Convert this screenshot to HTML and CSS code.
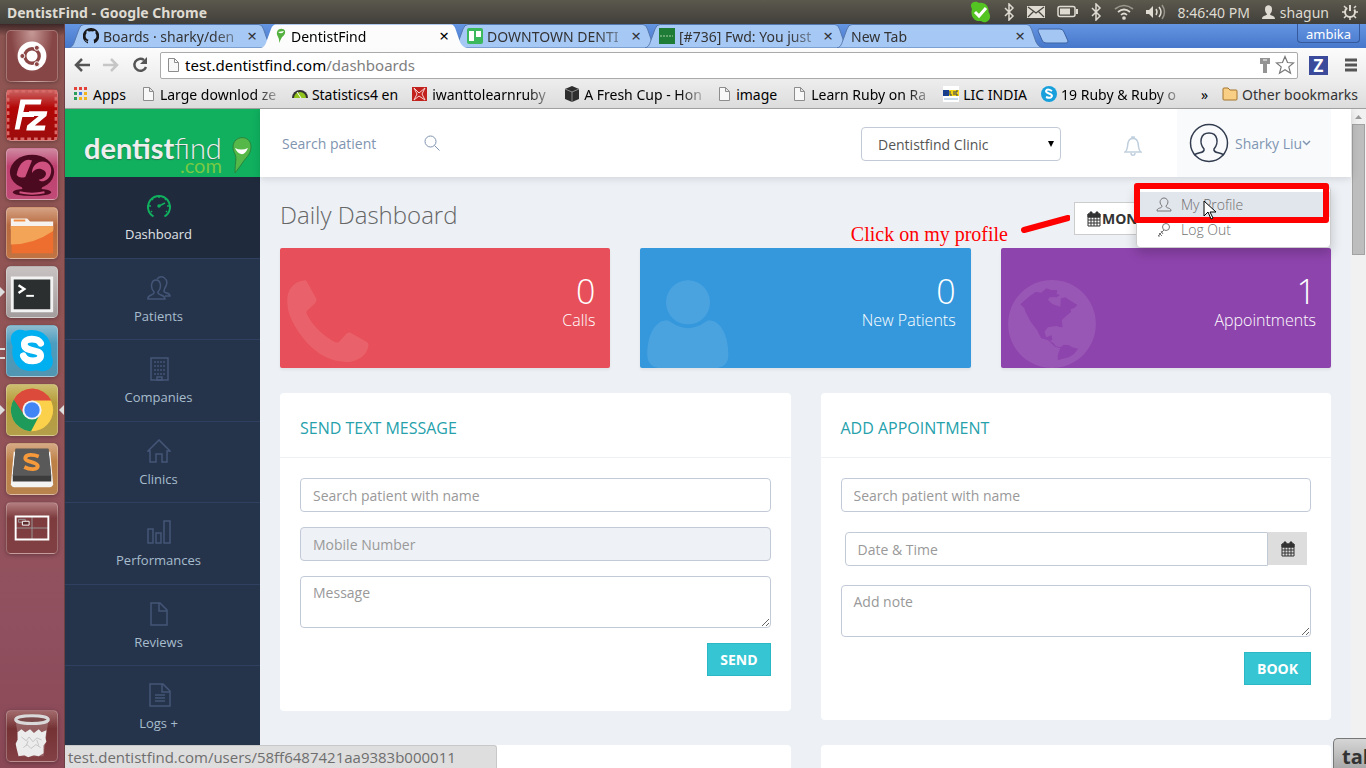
FILE: index.html
```html
<!DOCTYPE html>
<html lang="en">
<head>
    <meta charset="UTF-8">
    <meta name="viewport" content="width=device-width, initial-scale=1.0">
    <title>DentistFind</title>
    <link rel="stylesheet" href="styles.css">
</head>
<body>
    <svg class="sprite" aria-hidden="true">
        <symbol id="tabShape" viewBox="0 0 206 24">
            <path d="M0 24 C4 23 5 19 6 16 L10 5 Q11.500 .5 15 .5 H190 Q193 .5 194.500 5 L199 18 Q201 23 206 24z"/>
        </symbol>
        <symbol id="page" viewBox="0 0 16 16">
            <path d="M3.500 1.500h6l4 4v9h-10z M9.500 1.500v4h4" fill="#f8f8f8" stroke="#8d8d8d"/>
        </symbol>
        <symbol id="bluetooth" viewBox="0 0 12 18">
            <path d="M2 5l8 8-4 4V1l4 4-8 8" fill="none" stroke="#dfdbd2" stroke-width="1.500"/>
        </symbol>
        <symbol id="calendar" viewBox="0 0 14 16">
            <path d="M1 3h12v12H1z M1 6h12 M1 9h12 M1 12h12 M4 6v9 M7 6v9 M10 6v9" fill="none" stroke="#333"/>
            <path d="M1 3h12v3H1z M3 1h2v3H3z M9 1h2v3H9z" fill="#333" stroke="#333"/>
        </symbol>
    </svg>

    <!-- Desktop menu bar -->
    <div class="menubar">
        <span class="window-title">DentistFind - Google Chrome</span>
        <div class="indicators">
            <svg width="22" height="22" viewBox="0 0 22 22"><path d="M3 8C-1 1 7-1 10 2 17 1 20 6 19.500 11 24 17 18 24 12 20 5 21 1 15 3 8z" fill="#54c422"/><path d="M6 11l4 4 7-8" fill="none" stroke="#fff" stroke-width="3"/></svg>
            <svg width="12" height="18"><use href="#bluetooth"/></svg>
            <svg width="18" height="14" viewBox="0 0 18 14"><path d="M0 1h18v12H0z" fill="#dfdbd2"/><path d="M1 2l8 6 8-6 M1 12l6-6 M17 12l-6-6" fill="none" stroke="#47463f" stroke-width="1.200"/></svg>
            <svg width="21" height="14" viewBox="0 0 21 14"><rect x="1" y="1.500" width="17" height="10" rx="2" fill="none" stroke="#dfdbd2" stroke-width="1.500"/><path d="M3 3.500h10v6H3z M19 4h2v5h-2z" fill="#dfdbd2"/></svg>
            <svg width="12" height="18"><use href="#bluetooth"/></svg>
            <svg width="20" height="16" viewBox="0 0 20 16" fill="none" stroke="#dfdbd2" stroke-width="1.700"><path d="M1 5q9-7 18 0" opacity=".5"/><path d="M4 8q6-5 12 0M7 11q3-3 6 0"/><circle cx="10" cy="14" r="1"/></svg>
            <svg width="20" height="16" viewBox="0 0 20 16" fill="none" stroke="#dfdbd2" stroke-width="1.500"><path d="M0 6h3l4-4v12l-4-4H0z" fill="#dfdbd2" stroke="none"/><path d="M10 5q2 3 0 6M13 3q4 5 0 10"/><path d="M16 1q5 7 0 14" opacity=".5"/></svg>
            <span class="clock">8:46:40 PM</span>
            <span class="session">
                <svg width="13" height="15" viewBox="0 0 13 15"><path d="M3 4c0-5 7-5 7 0 0 3-1 4-2 5 0 2 5 1 5 5H0c0-4 5-3 5-5-1-1-2-2-2-5z" fill="#dfdbd2"/></svg>
                shagun
            </span>
            <svg width="18" height="18" viewBox="0 0 18 18" fill="none" stroke="#dfdbd2" stroke-width="2"><circle cx="9" cy="9" r="5" stroke-dasharray="24 8" stroke-dashoffset="-28"/><path d="M9 2v6"/><path d="M1 9h3M14 9h3M3 3l2 2M15 3l-2 2M3 15l2-2M15 15l-2-2M9 14v3" stroke-width="1.500"/></svg>
        </div>
    </div>

    <div class="desktop">
        <!-- Launcher -->
        <div class="launcher">
            <div class="tile dash">
                <svg viewBox="0 0 52 52"><circle cx="26" cy="26" r="15" fill="#fff"/><circle cx="26" cy="26" r="7.500" fill="none" stroke="#8b4746" stroke-width="3.500"/><g fill="#8b4746" stroke="#fff"><circle cx="16" cy="26" r="2.600"/><circle cx="31" cy="17.500" r="2.600"/><circle cx="31" cy="34.500" r="2.600"/></g></svg>
            </div>
            <div class="tile filezilla">
                <svg viewBox="0 0 52 52"><rect x="1" y="1" width="50" height="50" fill="none" stroke="#d86a68" stroke-width="3" stroke-dasharray="4 3"/><path d="M14 10h22l-1 5H19l-2 8h12l-1 5H16l-3 13H8z M23 22h19l-1 5-12 10h11l-1 5H20l1-5 12-10H22z" fill="#fff"/></svg>
            </div>
            <div class="tile rover">
                <svg viewBox="0 0 52 52"><ellipse cx="26" cy="24" rx="23" ry="18" fill="#4c0a20"/><ellipse cx="26" cy="45" rx="20" ry="4" fill="#4c0a20"/><path d="M14 36h24l-3 8H17z" fill="#4c0a20"/><path d="M10 27C12 14 20 9 26 12L19 29q-6 2-9-2z" fill="#cf5180"/><path d="M26 25c0-15 20-16 20-3 0 10-10 14-13 10 9-2 10-9 3-11-4-1-7 0-10 4z" fill="#cf5180"/><path d="M13 45q13 3 26 0" fill="none" stroke="#cf5180" stroke-width="2"/></svg>
            </div>
            <div class="tile files">
                <svg viewBox="0 0 52 52"><path d="M4 11h17l3 3h24v8H4z" fill="#f5f2ef"/><path d="M7 12h12v2H7z" fill="#f08b3f"/><path d="M4 19h44v28H5z" fill="#ee6e30"/><path d="M4 19h44v5Q28 38 4 38z" fill="#f3a457"/></svg>
            </div>
            <div class="tile terminal running">
                <svg viewBox="0 0 52 52"><path d="M4 10h44v37H4z" fill="#f2f2f2"/><path d="M7 13h38v31H7z" fill="#2c2f2f"/><path d="M12 19l6 4-6 4" fill="none" stroke="#fff" stroke-width="2.500"/><path d="M20 30h8" stroke="#fff" stroke-width="2"/></svg>
            </div>
            <div class="tile skype running-two">
                <svg viewBox="0 0 52 52"><path d="M6 21C0 9 9 1 19 5 38 1 48 14 46 30c6 13-5 20-15 16C14 50 3 38 6 21z" fill="#00aff0"/><path d="M35 18c-3-6-17-6-17 1 0 9 17 4 17 12 0 7-15 7-18 0" fill="none" stroke="#fff" stroke-width="7" stroke-linecap="round"/></svg>
            </div>
            <div class="tile chrome running focused">
                <svg viewBox="0 0 52 52"><circle cx="26" cy="26" r="22" fill="#fbd14b"/><path d="M26 26L7 15a22 22 0 0 0 18 33l9-17z" fill="#1e9a5a"/><path d="M26 16h20a22 22 0 0 0-39-1l10 15z" fill="#db4a3a"/><circle cx="26" cy="26" r="10" fill="#f4f4f4"/><circle cx="26" cy="26" r="8" fill="#4285f4"/></svg>
            </div>
            <div class="tile sublime">
                <svg viewBox="0 0 52 52"><path d="M7 8h38l3 34q-1 3-5 3H9q-4 0-5-3z" fill="#f4f4f4"/><path d="M9 5h34l3 28v6H6v-6z" fill="#3c3c3c"/><path d="M9 5h34l3 28H6z" fill="#595959"/><path d="M33 13c-5-2-14-3-14 2 0 4 13 3 13 8 0 4-8 4-14 1" fill="none" stroke="#f5993a" stroke-width="4"/></svg>
            </div>
            <div class="tile workspaces">
                <svg viewBox="0 0 52 52"><path d="M26 14v24M9 26h34" stroke="#999"/><path d="M9 14h34v24H9z" fill="none" stroke="#fff" stroke-width="2"/><path d="M12 17h7v3h-7z" fill="none" stroke="#999"/><path d="M16 19h7v4h-7z" fill="#5b2a2c" stroke="#fff"/></svg>
            </div>
            <div class="tile trash">
                <svg viewBox="0 0 52 52"><path d="M9 10h34l-5 37H14z" fill="#b08a8a" opacity=".5"/><path d="M11 22l4-3 4 3 5-3 4 4 5-4 3 3 5-2-1 8 1 4-3 4v8l-5 3-5-1-6 2-4-2-6 1-2-8-1-5 2-4z" fill="#ececec"/><path d="M15 27l5 4 3-4 4 5 4-4 5 2M17 38l4-3 4 4 5-4 5 3M22 31l-2 5M31 30l2 6" fill="none" stroke="#c4c4c4"/><ellipse cx="26" cy="9" rx="17" ry="4" fill="#7a4a4b" stroke="#d9d9d9" stroke-width="3"/></svg>
            </div>
        </div>

        <div class="browser">
            <div class="tabstrip">
                <div class="tab">
                    <svg class="tab-shape"><use href="#tabShape"/></svg>
                    <svg class="favicon" viewBox="0 0 16 16"><path d="M8 0a8 8 0 0 0-3 15.500v-2c-2 .5-2.500-.8-3-1.500 1 0 1.500 1.300 3 1 .1-.8.500-1 .5-1.200C2 11 2 7 3.600 5.300c-.4-1-.1-2 .2-2.600 1 0 1.800.6 2.300.9a8 8 0 0 1 3.800 0c.6-.4 1.400-.9 2.300-.9.400.8.500 1.800.2 2.600C14 7 14 11 10.500 11.800c.5.5.5 1 .5 3.700A8 8 0 0 0 8 0z" fill="#191717"/></svg>
                    <span class="tab-label">Boards · sharky/den</span>
                    <button class="tab-close" aria-label="Close tab">×</button>
                </div>
                <div class="tab active">
                    <svg class="tab-shape"><use href="#tabShape"/></svg>
                    <svg class="favicon narrow" viewBox="0 0 10 16"><path d="M1 4C2 0 8 0 9 3c1 4-3 5-4 8l-2 4C4 9 0 8 1 4z" fill="#55b13f"/><path d="M2 4l6-1q-2 4-6 1z" fill="#fff"/></svg>
                    <span class="tab-label">DentistFind</span>
                    <button class="tab-close" aria-label="Close tab">×</button>
                </div>
                <div class="tab">
                    <svg class="tab-shape"><use href="#tabShape"/></svg>
                    <svg class="favicon" viewBox="0 0 16 16"><rect width="16" height="16" rx="2" fill="#3cb95c"/><path d="M2 3h5v10H2zM9 3h5v6H9z" fill="#fff"/></svg>
                    <span class="tab-label">DOWNTOWN DENTI</span>
                    <button class="tab-close" aria-label="Close tab">×</button>
                </div>
                <div class="tab">
                    <svg class="tab-shape"><use href="#tabShape"/></svg>
                    <svg class="favicon" viewBox="0 0 16 16"><path d="M0 0h16v16H0z" fill="#1f7c37"/><path d="M1 8h13" stroke="#a9d2a7" stroke-dasharray="2 1"/></svg>
                    <span class="tab-label">[#736] Fwd: You just</span>
                    <button class="tab-close" aria-label="Close tab">×</button>
                </div>
                <div class="tab">
                    <svg class="tab-shape"><use href="#tabShape"/></svg>
                    <span class="tab-label">New Tab</span>
                    <button class="tab-close" aria-label="Close tab">×</button>
                </div>
                <button class="new-tab" aria-label="New tab"><svg width="32" height="17" viewBox="0 0 32 17"><path d="M2 1h21q3 0 4 3l4 9q0 2-2 2H9q-3 0-4-3L1 3q0-2 1-2z" fill="#a3c6f3" stroke="#3c62a5"/></svg></button>
                <button class="profile">ambika</button>
            </div>

            <div class="toolbar">
                <button aria-label="Back"><svg width="18" height="16" viewBox="0 0 18 16"><path d="M17 8H3M9 2L3 8l6 6" fill="none" stroke="#555" stroke-width="2.500"/></svg></button>
                <button aria-label="Forward"><svg width="18" height="16" viewBox="0 0 18 16"><path d="M1 8h14M9 2l6 6-6 6" fill="none" stroke="#c6c6c6" stroke-width="2.500"/></svg></button>
                <button aria-label="Reload"><svg width="18" height="16" viewBox="0 0 18 16"><path d="M13 3a6 6 0 1 0 2 7" fill="none" stroke="#555" stroke-width="2.500"/><path d="M16 0v7H9z" fill="#555"/></svg></button>
                <div class="omnibox">
                    <svg width="16" height="16"><use href="#page"/></svg>
                    <span class="url">test.dentistfind.com<span class="path">/dashboards</span></span>
                    <svg width="12" height="16" viewBox="0 0 12 16"><path d="M1 1h10v6H8v9H4V7H1z" fill="#949494"/><path d="M4 3h4" stroke="#fff"/></svg>
                    <svg width="20" height="20" viewBox="0 0 20 20"><path d="M10 1.500l2.500 6 6 .4-4.700 4 1.700 6.300-5.500-3.500-5.500 3.500 1.700-6.300-4.700-4 6-.4z" fill="#fff" stroke="#777" stroke-width="1.200"/></svg>
                </div>
                <span class="extension">Z</span>
                <button aria-label="Menu"><svg width="14" height="14" viewBox="0 0 14 14"><path d="M1 2h12M1 7h12M1 12h12" stroke="#555" stroke-width="3"/></svg></button>
            </div>

            <nav class="bookmarks" aria-label="Bookmarks">
                <a href="#"><svg width="16" height="16" viewBox="0 0 16 16"><path d="M1 1h3v3H1zM6 1h3v3H6zM11 1h3v3h-3z" fill="#e5413b"/><path d="M1 6h3v3H1z" fill="#2a9d58"/><path d="M6 6h3v3H6z" fill="#3b7ded"/><path d="M11 6h3v3h-3zM11 11h3v3h-3zM6 11h3v3H6z" fill="#f2b51d"/><path d="M1 11h3v3H1z" fill="#2a9d58"/></svg><span>Apps</span></a>
                <a href="#"><svg width="16" height="16"><use href="#page"/></svg><span class="long">Large downlod ze</span></a>
                <a href="#"><svg width="16" height="16" viewBox="0 0 16 16"><path d="M0 12a8 8 0 0 1 16 0z" fill="#333"/><path d="M2 12a6 6 0 0 1 12 0z" fill="#93c51f"/><path d="M5 6l4 6" stroke="#fff"/></svg><span>Statistics4 en</span></a>
                <a href="#"><svg width="16" height="16" viewBox="0 0 16 16"><path d="M0 1h15v14H0z" fill="#c2211d"/><path d="M2 2l5 5 6-5-3 6 3 6-6-4-5 4 3-6z" fill="none" stroke="#f6d5d2"/></svg><span class="long">iwanttolearnruby</span></a>
                <a href="#"><svg width="16" height="16" viewBox="0 0 16 16"><path d="M1 3l7-3 7 3v10l-7 3-7-3z" fill="#2e2e2e"/><path d="M1 3l7 3 7-3M8 6v10" fill="none" stroke="#8a8a8a"/></svg><span class="long">A Fresh Cup - Hon</span></a>
                <a href="#"><svg width="16" height="16"><use href="#page"/></svg><span>image</span></a>
                <a href="#"><svg width="16" height="16"><use href="#page"/></svg><span class="long">Learn Ruby on Ra</span></a>
                <a href="#"><svg width="16" height="16" viewBox="0 0 16 16"><path d="M0 0h16v16H0z" fill="#fff"/><path d="M0 4h6v6H0z" fill="#173f8f"/><path d="M6 4h10v6H6z" fill="#f5d414"/><path d="M2 7h2M7 5v4h2M11 5v4M15 5h-2v4h2" fill="none" stroke="#2b3c60"/><path d="M1 13h14" stroke="#8bb7d8"/></svg><span>LIC INDIA</span></a>
                <a href="#"><svg width="16" height="16" viewBox="0 0 16 16"><circle cx="8" cy="8" r="8" fill="#17a0db"/><path d="M11 5q-5-3-6 0c0 3 6 2 6 5q-1 3-6 1" fill="none" stroke="#fff" stroke-width="2"/></svg><span class="long">19 Ruby &amp; Ruby o</span></a>
                <button class="more" aria-label="More bookmarks">»</button>
                <a class="other" href="#"><svg width="16" height="16" viewBox="0 0 16 16"><path d="M1 3q0-1 1-1h4l2 2h6q1 0 1 1v8q0 1-1 1H2q-1 0-1-1z" fill="#f9cf86" stroke="#a4752d"/></svg><span>Other bookmarks</span></a>
            </nav>

            <div class="viewport">
                <aside class="sidebar">
                    <a class="logo" href="#">
                        <span class="logo-text">
                            <span class="logo-name"><b>dentist</b>find</span>
                            <span class="logo-tld">.com</span>
                        </span>
                        <svg width="20" height="37" viewBox="0 0 20 37"><path d="M1 10C1-2 19-3 19 10c0 8-6 11-10 18l-6 8c0-12 2-14 0-19-1-2-2-4-2-7z" fill="#55b848" stroke="#28853e"/><path d="M3 11q6 3 13 0-3 7-7 6-4-1-6-6z" fill="#fff"/></svg>
                    </a>
                    <nav class="side-nav" aria-label="Main">
                        <a class="active" href="#">
                            <svg viewBox="0 0 24 24"><path d="M6.500 22.500A11 11 0 1 1 17.500 22.500" stroke-width="2"/><path d="M12 12l6-3M12 2v2M5 5l1 1M2 12h2M19 5l-1 1M22 12h-2M4 18l1-1M20 18l-1-1" stroke-width="1.500"/><circle cx="12" cy="12" r="1"/></svg>
                            Dashboard
                        </a>
                        <a href="#">
                            <svg viewBox="0 0 24 24"><path d="M1 23c-1-5 7-3 6-7-4-4-3-12 2-12s6 8 2 12c-1 4 7 2 7 7z"/><path d="M10 3c5-5 12 0 9 7-2 3-2 3-2 5 0 3 6 1 6 5h-5"/></svg>
                            Patients
                        </a>
                        <a href="#">
                            <svg viewBox="0 0 24 24"><path d="M4 1h17v22H4z"/><path d="M7 5h11M7 9h11M7 13h11M7 17h11" stroke-dasharray="2 1" stroke-width="2" opacity=".7"/><path d="M10 20h5v3h-5z"/></svg>
                            Companies
                        </a>
                        <a href="#">
                            <svg viewBox="0 0 24 24"><path d="M1 12L12 1l11 11h-3v11h-5v-8H9v8H3V12z"/></svg>
                            Clinics
                        </a>
                        <a href="#">
                            <svg viewBox="0 0 24 24"><path d="M1 9h5v14H1zM9 13h5v10H9zM17 1h6v22h-6z"/></svg>
                            Performances
                        </a>
                        <a href="#">
                            <svg viewBox="0 0 24 24"><path d="M4 1h9l7 7v15H4z M12 1v8h8"/></svg>
                            Reviews
                        </a>
                        <a href="#">
                            <svg viewBox="0 0 24 24"><path d="M3 1h13l7 7v15H3z M15 1v8h8M8 12h10M8 15h10M8 18h10"/></svg>
                            Logs +
                        </a>
                    </nav>
                </aside>

                <main class="main">
                    <header class="topbar">
                        <input class="search" type="text" aria-label="Search patient" placeholder="Search patient">
                        <button class="icon-button" aria-label="Search"><svg width="16" height="16" viewBox="0 0 16 16"><circle cx="6.500" cy="6.500" r="5.500"/><path d="M10.500 10.500l5 5"/></svg></button>
                        <div class="clinic-wrap">
                            <select class="clinic" aria-label="Clinic"><option>Dentistfind Clinic</option></select>
                        </div>
                        <button class="icon-button bell" aria-label="Notifications"><svg width="18" height="20" viewBox="0 0 18 20"><path d="M1 16c3-2 2-4 3-9 1-6 9-6 10 0 1 5 0 7 3 9zM7 17c0 3 4 3 4 0M8 3V1h2v2"/></svg></button>
                        <div class="user">
                            <button class="user-toggle">
                                <svg width="40" height="40" viewBox="0 0 40 40"><circle cx="20" cy="20" r="18.500"/><path d="M5 32c5-3 11-2 10-6-5-6-4-16 5-16s10 10 5 16c-1 4 5 3 10 6"/></svg>
                                <span>Sharky Liu</span>
                                <svg class="chevron" width="9" height="8" viewBox="0 0 9 8"><path d="M1 2l3.500 3.500L8 2"/></svg>
                            </button>
                            <div class="user-menu">
                                <a class="hover" href="#"><svg width="16" height="16" viewBox="0 0 16 16"><path d="M1 14c0-4 5-2 5-5-4-4-1-8 2-8s6 4 2 8c0 3 5 1 5 5z"/></svg>My Profile</a>
                                <a href="#"><svg width="16" height="16" viewBox="0 0 16 16"><circle cx="10" cy="5" r="3.500"/><path d="M8 8l-6 6M3 11l3 3M5 9l2 3M2 14h2"/></svg>Log Out</a>
                                <div class="highlight"></div>
                                <div class="callout">
                                    <span>Click on my profile</span>
                                    <svg width="52" height="22" viewBox="0 0 52 22"><path d="M6 16l44-12" stroke="#f00" stroke-width="6" stroke-linecap="round"/></svg>
                                </div>
                                <svg class="pointer" width="14" height="20" viewBox="0 0 14 20"><path d="M1 1v15l4-4 3 7 2-1-3-6h6z" fill="#fff" stroke="#000"/></svg>
                            </div>
                        </div>
                    </header>

                    <div class="content">
                        <div class="page-head">
                            <h1>Daily Dashboard</h1>
                            <button class="date-range"><svg width="14" height="16"><use href="#calendar"/></svg>MON</button>
                        </div>

                        <div class="stats">
                            <div class="stat red">
                                <svg width="82" height="82" viewBox="0 0 246 246"><path d="M55 1C20 4 1 30 1 60 1 90 8 110 25 140c30 50 65 80 100 95 25 10 50 12 65 10 35-5 55-30 54-52q0-4-6-8l-48-27q-5-2-10 2l-22 24q-5 6-15 2C105 165 75 135 59 102q-3-7 3-12l22-20q7-8 3-15L60 6q-2-5-5-5z"/></svg>
                                <strong>0</strong>
                                <span>Calls</span>
                            </div>
                            <div class="stat blue">
                                <svg width="82" height="88" viewBox="0 0 246 264"><circle cx="123" cy="67" r="66"/><path d="M58 121C20 125 1 170 1 225c0 25 17 40 44 40h155c28 0 44-15 44-40 0-55-19-100-57-104q-7 0-12 5-52 37-104 0-6-5-13-5z"/></svg>
                                <strong>0</strong>
                                <span>New Patients</span>
                            </div>
                            <div class="stat purple">
                                <svg width="88" height="88" viewBox="0 0 253 264" preserveAspectRatio="none"><path fill-rule="evenodd" d="M126 0a126 132 0 1 0 1 0z M35 73L60 50 80 35 95 38 110 25 125 30 142 30 140 42 150 45 140 52 120 52 115 60 128 72 150 80 152 55 165 52 180 62 200 75 190 85 180 88 182 95 165 110 155 120 157 142 150 142 140 138 115 142 105 155 110 172 125 165 128 180 120 182 132 190 137 198 150 202 160 194 175 195 185 202 202 206 190 222 175 232 143 241 143 225 150 205 135 200 115 181 95 175 83 150 65 125 50 95 47 85z"/></svg>
                                <strong>1</strong>
                                <span>Appointments</span>
                            </div>
                        </div>

                        <div class="panels">
                            <section class="panel">
                                <h2>Send Text Message</h2>
                                <form class="panel-body">
                                    <input type="text" aria-label="Search patient with name" placeholder="Search patient with name">
                                    <input type="text" aria-label="Mobile Number" placeholder="Mobile Number" readonly>
                                    <textarea aria-label="Message" placeholder="Message"></textarea>
                                    <button class="submit" type="button">SEND</button>
                                </form>
                            </section>
                            <section class="panel">
                                <h2>Add Appointment</h2>
                                <form class="panel-body">
                                    <input type="text" aria-label="Search patient with name" placeholder="Search patient with name">
                                    <div class="date-group">
                                        <input type="text" aria-label="Date &amp; Time" placeholder="Date &amp; Time">
                                        <button type="button" aria-label="Pick a date"><svg width="14" height="16"><use href="#calendar"/></svg></button>
                                    </div>
                                    <textarea aria-label="Add note" placeholder="Add note"></textarea>
                                    <button class="submit" type="button">BOOK</button>
                                </form>
                            </section>
                            <section class="panel empty"></section>
                            <section class="panel empty"></section>
                        </div>
                    </div>
                </main>

                <div class="scrollbar">
                    <svg width="13" height="15" viewBox="0 0 13 15"><path d="M3 10l3.500-4 3.500 4z" fill="#9a9a9a"/></svg>
                    <div class="thumb"></div>
                </div>
                <div class="status">test.dentistfind.com/users/58ff6487421aa9383b000011</div>
                <button class="talk">tal</button>
            </div>
        </div>
    </div>
</body>
</html>
```
FILE: styles.css
```css
* {
    margin: 0;
    padding: 0;
    box-sizing: border-box;
}

body {
    display: flex;
    flex-direction: column;
    height: 100vh;
    overflow: hidden;
    background: #ecf0f5;
    color: #333;
    font-family: "Open Sans", sans-serif;
    font-size: 14px;
}

a {
    color: inherit;
    text-decoration: none;
}

button {
    background: none;
    border: none;
    color: inherit;
    font: inherit;
}

svg {
    display: block;
    flex-shrink: 0;
}

.sprite {
    position: absolute;
    width: 0;
    height: 0;
}

/* Desktop */
.menubar {
    display: flex;
    align-items: center;
    justify-content: space-between;
    height: 24px;
    flex-shrink: 0;
    padding: 0 7px;
    background: linear-gradient(#5b584d, #403f3a);
    color: #dfdbd2;
    font-family: "Noto Sans", sans-serif;
}

.window-title {
    font-weight: 700;
}

.indicators {
    display: flex;
    align-items: center;
    gap: 12px;
}

.session {
    display: flex;
    align-items: center;
    gap: 5px;
}

.desktop {
    display: flex;
    flex: 1;
    min-height: 0;
}

.launcher {
    display: flex;
    flex-direction: column;
    gap: 7px;
    width: 65px;
    padding: 6px;
    background: linear-gradient(#3d2727, #8d5551 12px, #935457 50%, #91505f 80%, #8a4856);
    border-right: 1px solid #6d4043;
}

.tile {
    position: relative;
    width: 52px;
    height: 52px;
    flex-shrink: 0;
    border: 1px solid rgba(255, 255, 255, 0.25);
    border-radius: 5px;
    box-shadow: 0 1px 4px rgba(0, 0, 0, 0.3);
}

.tile svg {
    width: 50px;
    height: 50px;
}

.dash { background: radial-gradient(at 50% 0, #c69a98, #874646 60%); }
.filezilla { background: linear-gradient(#c96563, #b40606 35%, #9c0d0d); }
.rover { background: linear-gradient(#cf88a0, #be3f6e 35%, #c04b76); }
.files { background: linear-gradient(#d5a283, #b76a3f 35%, #c27342); }
.terminal { background: linear-gradient(#c9c2c2, #a29c9c); }
.skype { background: linear-gradient(#8dbcd0, #4b9dbf 35%, #5195b1); }
.chrome { background: linear-gradient(#cdbe70, #b59b3a 35%, #b49f4a); }
.sublime { background: linear-gradient(#d6a985, #bd8045 35%, #b9834e); }
.workspaces { background: linear-gradient(#b47e7f, #7d3b3e 30%, #814043); }

.trash {
    margin-top: auto;
    background: linear-gradient(#a26a6c, #743234 35%, #834146);
}

.running::before,
.focused::after {
    content: "";
    position: absolute;
    top: 20px;
    left: -7px;
    border: 5px solid transparent;
    border-left-color: #ddd;
    border-right-width: 0;
}

.focused::after {
    left: auto;
    right: -7px;
    border-left-width: 0;
    border-right: 5px solid #ddd;
}

.running-two::before {
    content: "";
    position: absolute;
    top: 22px;
    left: -7px;
    width: 5px;
    height: 7px;
    border: solid #ddd;
    border-width: 2px 0;
}

/* Browser chrome */
.browser {
    display: flex;
    flex-direction: column;
    flex: 1;
    min-width: 0;
    font-family: "Noto Sans", sans-serif;
}

.tabstrip {
    display: flex;
    height: 24px;
    flex-shrink: 0;
    padding: 0 6px 0 4px;
    background: linear-gradient(#6495e2, #4777ca);
    color: #333;
}

.tab {
    position: relative;
    display: flex;
    align-items: center;
    gap: 4px;
    flex: 0 1 192px;
    min-width: 0;
    padding-left: 14px;
}

.tab-shape {
    position: absolute;
    top: 0;
    left: 0;
    width: 206px;
    height: 24px;
    fill: #a6c8f5;
    stroke: #5578b0;
}

.tab.active {
    z-index: 1;
    color: #000;
}

.tab.active .tab-shape {
    fill: #fcfcfc;
    stroke: none;
}

.favicon {
    position: relative;
    width: 16px;
    height: 16px;
}

.favicon.narrow {
    width: 12px;
}

.tab-label {
    position: relative;
    flex: 1;
    overflow: hidden;
    white-space: nowrap;
    mask-image: linear-gradient(90deg, #000 110px, transparent 150px);
}

.tab-close {
    position: relative;
    width: 18px;
    font-size: 17px;
    line-height: 20px;
}

.new-tab {
    margin: 4px 0 0 8px;
    align-self: flex-start;
}

.profile {
    align-self: flex-start;
    height: 19px;
    margin-left: auto;
    padding: 0 8px;
    border: 1px solid #35599b;
    border-top: none;
    border-radius: 0 0 4px 4px;
    color: #fff;
    font-size: 13px;
    line-height: 20px;
}

.toolbar {
    display: flex;
    align-items: center;
    gap: 11px;
    height: 34px;
    flex-shrink: 0;
    padding: 0 8px;
    background: linear-gradient(#fcfcfc, #ececec);
}

.omnibox {
    display: flex;
    align-items: center;
    gap: 4px;
    flex: 1;
    height: 27px;
    padding: 0 2px 0 4px;
    background: #fff;
    border: 1px solid #aaa;
    border-radius: 2px;
}

.url {
    flex: 1;
    color: #000;
    font-size: 15px;
}

.path {
    color: #808080;
}

.extension {
    width: 19px;
    height: 19px;
    margin-right: 5px;
    background: #3c4a9b;
    color: #fff;
    font-size: 17px;
    font-weight: 700;
    line-height: 19px;
    text-align: center;
}

.bookmarks {
    display: flex;
    align-items: center;
    gap: 14px;
    height: 27px;
    flex-shrink: 0;
    padding: 0 8px 2px;
    background: linear-gradient(#ececec, #dcdcdc);
    border-bottom: 1px solid #a0a0a0;
    color: #000;
    white-space: nowrap;
}

.bookmarks a {
    display: flex;
    align-items: center;
    gap: 4px;
}

.bookmarks .long {
    width: 118px;
    mask-image: linear-gradient(90deg, #000 95px, transparent 125px);
}

.bookmarks .more {
    margin-left: auto;
}

.bookmarks .other {
    color: #333;
}

/* Page */
.viewport {
    position: relative;
    display: flex;
    flex: 1;
    min-height: 0;
    overflow: hidden;
    font-family: "Open Sans", sans-serif;
}

.sidebar {
    width: 195px;
    flex-shrink: 0;
    background: #26344b;
}

.logo {
    display: flex;
    justify-content: space-between;
    height: 68px;
    padding: 28px 8px 0 19px;
    background: #10b05f;
    color: #eee;
    font-family: Lato, sans-serif;
}

.logo-text {
    display: flex;
    flex-direction: column;
}

.logo-name {
    font-size: 29px;
    font-weight: 300;
    line-height: 21px;
    text-shadow: 0 1px 1px #24794b;
}

.logo-name b {
    font-weight: 700;
}

.logo-tld {
    color: #7ac943;
    font-size: 20px;
    line-height: 14px;
    text-align: right;
}

.side-nav a {
    display: block;
    padding: 17px 8px 14px 0;
    border-bottom: 1px solid #2f4060;
    color: #a7bdcd;
    font-size: 13px;
    line-height: 1.42857;
    text-align: center;
}

.side-nav svg {
    width: 24px;
    height: 24px;
    margin: 0 auto 7px;
    fill: none;
    stroke: #445678;
    stroke-width: 1.5;
}

.side-nav .active {
    background: #1f2a3c;
    color: #e0e4e8;
}

.side-nav .active svg {
    stroke: #10b05f;
}

.main {
    flex: 1;
    min-width: 0;
    background: #edf1f6;
}

.topbar {
    position: relative;
    z-index: 2;
    display: flex;
    align-items: center;
    height: 68px;
    padding: 0 20px 0 22px;
    background: #fff;
    box-shadow: 0 1px 8px rgba(0, 0, 0, 0.14);
}

.search {
    width: 142px;
    border: none;
    font: inherit;
}

.search::placeholder {
    color: #8094b0;
}

.icon-button svg {
    fill: none;
    stroke: #8094b0;
}

.clinic-wrap {
    position: relative;
    width: 200px;
    margin: 2px 50px 0 auto;
}

.clinic-wrap::after {
    content: "";
    position: absolute;
    top: 14px;
    right: 7px;
    border: 3px solid transparent;
    border-top: 6px solid #000;
    border-bottom: none;
}

.clinic {
    width: 100%;
    height: 34px;
    padding: 0 16px;
    appearance: none;
    background: #fff;
    border: 1px solid #c2cad8;
    border-radius: 4px;
    color: #555;
    font: inherit;
}

.bell {
    display: flex;
    justify-content: center;
    width: 44px;
    margin-right: 22px;
    padding-top: 6px;
}

.bell svg {
    stroke: #c0cfdd;
    stroke-width: 1.5;
}

.user {
    position: relative;
    width: 154px;
    height: 68px;
    background: #f9fafc;
}

.user-toggle {
    display: flex;
    align-items: center;
    gap: 6px;
    width: 100%;
    height: 100%;
    padding-left: 12px;
    color: #7f96b2;
}

.user-toggle svg {
    fill: none;
    stroke: #323d4f;
    stroke-width: 1.5;
}

.user-toggle .chevron {
    margin-left: -6px;
    stroke: #7f96b2;
}

.user-menu {
    position: absolute;
    top: 77px;
    right: 0;
    width: 195px;
    padding: 5px 0;
    background: #fff;
    border: 1px solid #ccc;
    border-radius: 4px;
    box-shadow: 0 5px 12px rgba(0, 0, 0, 0.2);
}

.user-menu a {
    display: flex;
    align-items: center;
    gap: 9px;
    height: 25px;
    padding-left: 19px;
    color: #6f6f6f;
    font-weight: 300;
}

.user-menu a svg {
    fill: none;
    stroke: #777;
}

.user-menu .hover {
    background: #e1e5ec;
}

.highlight {
    position: absolute;
    top: -4px;
    left: -3px;
    width: 195px;
    height: 40px;
    border: 6px solid #f00;
    border-radius: 3px;
}

.callout {
    position: absolute;
    top: 27px;
    right: 260px;
    display: flex;
    gap: 10px;
    color: #f00;
    font-family: "Liberation Serif", serif;
    font-size: 20px;
    line-height: 40px;
    white-space: nowrap;
}

.pointer {
    position: absolute;
    top: 13px;
    left: 66px;
}

.content {
    padding: 24px 20px;
}

.page-head {
    display: flex;
    align-items: center;
    justify-content: space-between;
    height: 35px;
    margin-bottom: 12px;
}

.page-head h1 {
    align-self: flex-start;
    color: #666;
    font-size: 24px;
    font-weight: 300;
    line-height: 28px;
}

.date-range {
    display: flex;
    align-items: center;
    gap: 1px;
    width: 257px;
    height: 33px;
    padding: 0 12px;
    background: #fff;
    border: 1px solid #ccc;
    font-weight: 700;
}

.stats {
    display: grid;
    grid-template-columns: repeat(3, 1fr);
    gap: 30px;
    margin-bottom: 25px;
}

.stat {
    position: relative;
    display: flex;
    flex-direction: column;
    align-items: flex-end;
    height: 120px;
    padding: 25px 15px;
    border-radius: 2px;
    box-shadow: 0 2px 3px rgba(0, 0, 0, 0.06);
    color: #fff;
    font-weight: 300;
}

.stat svg {
    position: absolute;
    top: 32px;
    left: 7px;
    fill: #fff;
    opacity: 0.1;
}

.stat strong {
    font-size: 34px;
    font-weight: 300;
    line-height: 36px;
}

.stat span {
    font-size: 16px;
    line-height: 22px;
}

.red { background: #e7505a; }
.blue { background: #3598dc; }
.purple { background: #8e44ad; }

.panels {
    display: grid;
    grid-template-columns: 1fr 1fr;
    align-items: start;
    column-gap: 30px;
    row-gap: 25px;
}

.panel {
    background: #fff;
    border-radius: 4px;
}

.panel h2 {
    padding: 24px 20px 18px;
    border-bottom: 1px solid #eef1f5;
    color: #26a1ab;
    font-size: 16px;
    font-weight: 400;
    line-height: 22px;
    text-transform: uppercase;
}

.panel-body {
    display: flex;
    flex-direction: column;
    gap: 15px;
    padding: 20px 20px 35px;
}

.panel-body input,
.panel-body textarea {
    width: 100%;
    height: 34px;
    padding: 6px 12px;
    border: 1px solid #c2cad8;
    border-radius: 4px;
    background: #fff;
    font: inherit;
    line-height: 20px;
}

.panel-body textarea {
    height: 52px;
}

.panel-body input::placeholder,
.panel-body textarea::placeholder {
    color: #999;
}

.panel-body input:read-only {
    background: #eef1f5;
}

.date-group {
    display: flex;
    padding: 5px 4px 4px;
}

.panel-body .date-group input {
    border-radius: 4px 0 0 4px;
}

.date-group button {
    display: flex;
    align-items: center;
    justify-content: center;
    width: 39px;
    height: 33px;
    flex-shrink: 0;
    background: #ddd;
}

.submit {
    align-self: flex-end;
    height: 33px;
    padding: 0 12px;
    background: #36c6d3;
    border: 1px solid #2bb8c4;
    color: #fff;
    font-weight: 700;
}

.empty {
    height: 100px;
}

.scrollbar {
    width: 15px;
    flex-shrink: 0;
    padding: 0 1px;
    background: #f1f1f1;
}

.thumb {
    height: 131px;
    background: #bdbdbd;
    border: 1px solid #a2a2a2;
}

.status {
    position: absolute;
    bottom: 0;
    left: 0;
    z-index: 3;
    width: 432px;
    height: 23px;
    padding-left: 3px;
    background: #dedede;
    border: 1px solid #c8c8c8;
    border-width: 1px 1px 0 0;
    border-radius: 0 3px 0 0;
    color: #6e6e6e;
    font-size: 15px;
    line-height: 22px;
}

.talk {
    position: absolute;
    right: 0;
    bottom: 0;
    z-index: 3;
    width: 33px;
    height: 30px;
    padding: 6px 0 0 8px;
    overflow: hidden;
    background: linear-gradient(#d6d6d6, #a9a9a9);
    border: 1px solid #777;
    border-width: 1px 0 0 1px;
    border-radius: 5px 0 0 0;
    color: #333;
    font-size: 20px;
    font-weight: 700;
    line-height: 22px;
    text-align: left;
}
```
